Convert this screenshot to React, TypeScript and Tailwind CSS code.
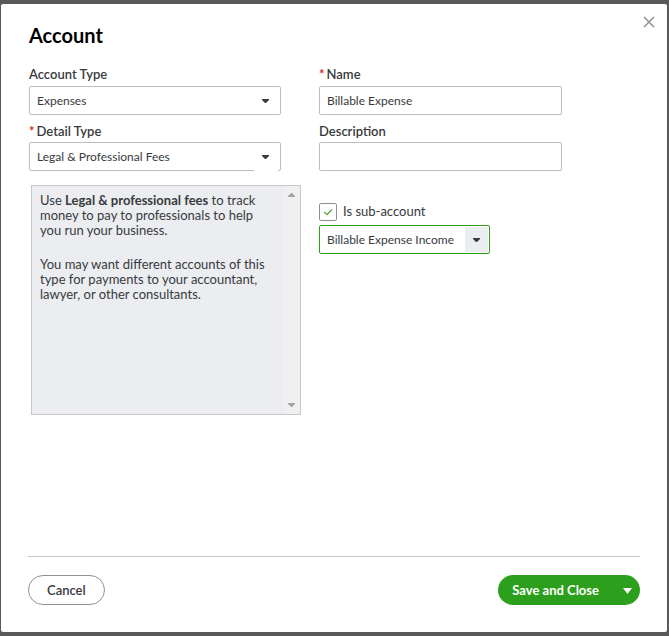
import { useState } from 'react'
import type { ReactNode } from 'react'

const FIELD =
  'block h-[29px] w-full rounded-xs border border-[#babec5] bg-white px-[7px] text-[12px] text-[#393a3d] outline-none'

function Caret({ className }: { className: string }) {
  return (
    <svg viewBox="0 0 7 4" className={className} fill="currentColor" aria-hidden="true">
      <path d="M0 0h7v1L4 4H3L0 1z" />
    </svg>
  )
}

function Label({ htmlFor, required, children }: { htmlFor: string; required?: boolean; children: ReactNode }) {
  return (
    <label htmlFor={htmlFor} className="flex h-[18px] items-center gap-[2px] text-[13px] font-semibold text-[#393a3d]">
      {required && <span className="font-bold text-[#d52b1e]">*</span>}
      {children}
    </label>
  )
}

function SelectField({ id, options, notched }: { id: string; options: string[]; notched?: boolean }) {
  return (
    <div className="relative max-w-[252px]">
      <select id={id} className={`${FIELD} appearance-none`}>
        {options.map((option) => (
          <option key={option}>{option}</option>
        ))}
      </select>
      <Caret className="pointer-events-none absolute top-[13px] right-3 h-1 w-[7px] text-[#393a3d]" />
      {notched && <span className="absolute right-[3px] bottom-0 h-px w-6 bg-white" />}
    </div>
  )
}

function DetailHelp() {
  return (
    <div className="mt-[14px] ml-[2px] flex h-[230px] max-w-[270px] border border-[#c7c7c7] bg-[#ebedf1]">
      <div className="flex-1 py-[7px] pl-2 text-[13px] leading-[15px] text-[#393a3d]">
        <p>
          Use <strong className="font-bold">Legal &amp; professional fees</strong> to track
          <br />
          money to pay to professionals to help
          <br />
          you run your business.
        </p>
        <p className="mt-[19px]">
          You may want different accounts of this
          <br />
          type for payments to your accountant,
          <br />
          lawyer, or other consultants.
        </p>
      </div>
      <div className="flex w-[17px] flex-col items-center justify-between bg-[#f0f0f0] py-[7px] text-[#a3a3a3]">
        <Caret className="h-1 w-[7px] rotate-180" />
        <Caret className="h-1 w-[7px]" />
      </div>
    </div>
  )
}

export default function App() {
  const [name, setName] = useState('Billable Expense')
  const [description, setDescription] = useState('')
  const [isSub, setIsSub] = useState(true)
  const [parent, setParent] = useState('Billable Expense Income')

  return (
    <main className="flex min-h-screen bg-[#5a595a] py-1 pr-[2px] pl-px font-['Lato','Open_Sans',sans-serif]">
      <section
        role="dialog"
        aria-labelledby="account-title"
        className="relative flex flex-1 flex-col rounded-xs bg-white pt-[19px] pr-[27px] pb-[27px] pl-7"
      >
        <button type="button" aria-label="Close" className="absolute top-3 right-3 text-[#8d9096]">
          <svg viewBox="0 0 12 12" className="size-3" fill="none" stroke="currentColor" strokeWidth="1.5" aria-hidden="true">
            <path d="M1 1l10 10M11 1L1 11" />
          </svg>
        </button>

        <h1 id="account-title" className="text-[20px] leading-6 font-bold text-black">
          Account
        </h1>

        <form className="mt-[19px] grid grid-cols-[290fr_321fr]">
          <div>
            <Label htmlFor="account-type">Account Type</Label>
            <div className="mt-[2px] mb-2">
              <SelectField id="account-type" options={['Expenses']} />
            </div>
            <Label htmlFor="detail-type" required>
              Detail Type
            </Label>
            <div className="mt-px">
              <SelectField id="detail-type" options={['Legal & Professional Fees']} notched />
            </div>
            <DetailHelp />
          </div>

          <div>
            <Label htmlFor="name" required>
              Name
            </Label>
            <div className="mt-[2px] mb-2 max-w-[243px]">
              <input id="name" className={FIELD} value={name} onChange={(e) => setName(e.target.value)} />
            </div>
            <Label htmlFor="description">Description</Label>
            <div className="mt-px max-w-[243px]">
              <input
                id="description"
                className={FIELD}
                value={description}
                onChange={(e) => setDescription(e.target.value)}
              />
            </div>

            <label className="mt-8 flex h-[18px] items-center gap-[6px] text-[13px] text-[#393a3d]">
              <span className="relative size-[18px]">
                <input
                  type="checkbox"
                  checked={isSub}
                  onChange={(e) => setIsSub(e.target.checked)}
                  className="peer block size-[18px] appearance-none rounded-xs border border-[#8d9096] bg-white"
                />
                <svg
                  viewBox="0 0 18 18"
                  className="pointer-events-none absolute inset-0 hidden size-[18px] text-[#6aa84f] peer-checked:block"
                  fill="none"
                  stroke="currentColor"
                  strokeWidth="1.5"
                  aria-hidden="true"
                >
                  <path d="M5 9l3 2.5L13 6.5" />
                </svg>
              </span>
              Is sub-account
            </label>
            <div className="mt-1 flex h-[29px] max-w-[171px] rounded-xs border border-[#2ca01c] bg-white p-px">
              <input
                aria-label="Parent account"
                value={parent}
                onChange={(e) => setParent(e.target.value)}
                className="mr-[9px] ml-[6px] min-w-0 flex-1 text-[12px] text-[#393a3d] outline-none"
              />
              <button
                type="button"
                aria-label="Show accounts"
                className="flex w-[23px] items-center justify-center bg-[#ebedf1] text-[#393a3d]"
              >
                <Caret className="h-1 w-[7px]" />
              </button>
            </div>
          </div>
        </form>

        <footer className="mt-auto -ml-px flex items-center justify-between border-t border-[#c7c7c7] pt-[18px]">
          <button
            type="button"
            className="h-[30px] rounded-full border border-[#8d9096] px-[18px] pt-px text-[13px] font-semibold text-[#393a3d]"
          >
            Cancel
          </button>
          <div className="flex h-[30px] rounded-full bg-[#2ca01c] text-white">
            <button type="button" className="pt-px pl-[14px] text-[13px] font-bold">
              Save and Close
            </button>
            <button type="button" aria-label="More save options" className="flex items-center pr-2 pl-6">
              <svg viewBox="0 0 9 6" className="mt-[2px] h-[6px] w-[9px]" fill="currentColor" aria-hidden="true">
                <path d="M0 0h9L4.5 6z" />
              </svg>
            </button>
          </div>
        </footer>
      </section>
    </main>
  )
}
